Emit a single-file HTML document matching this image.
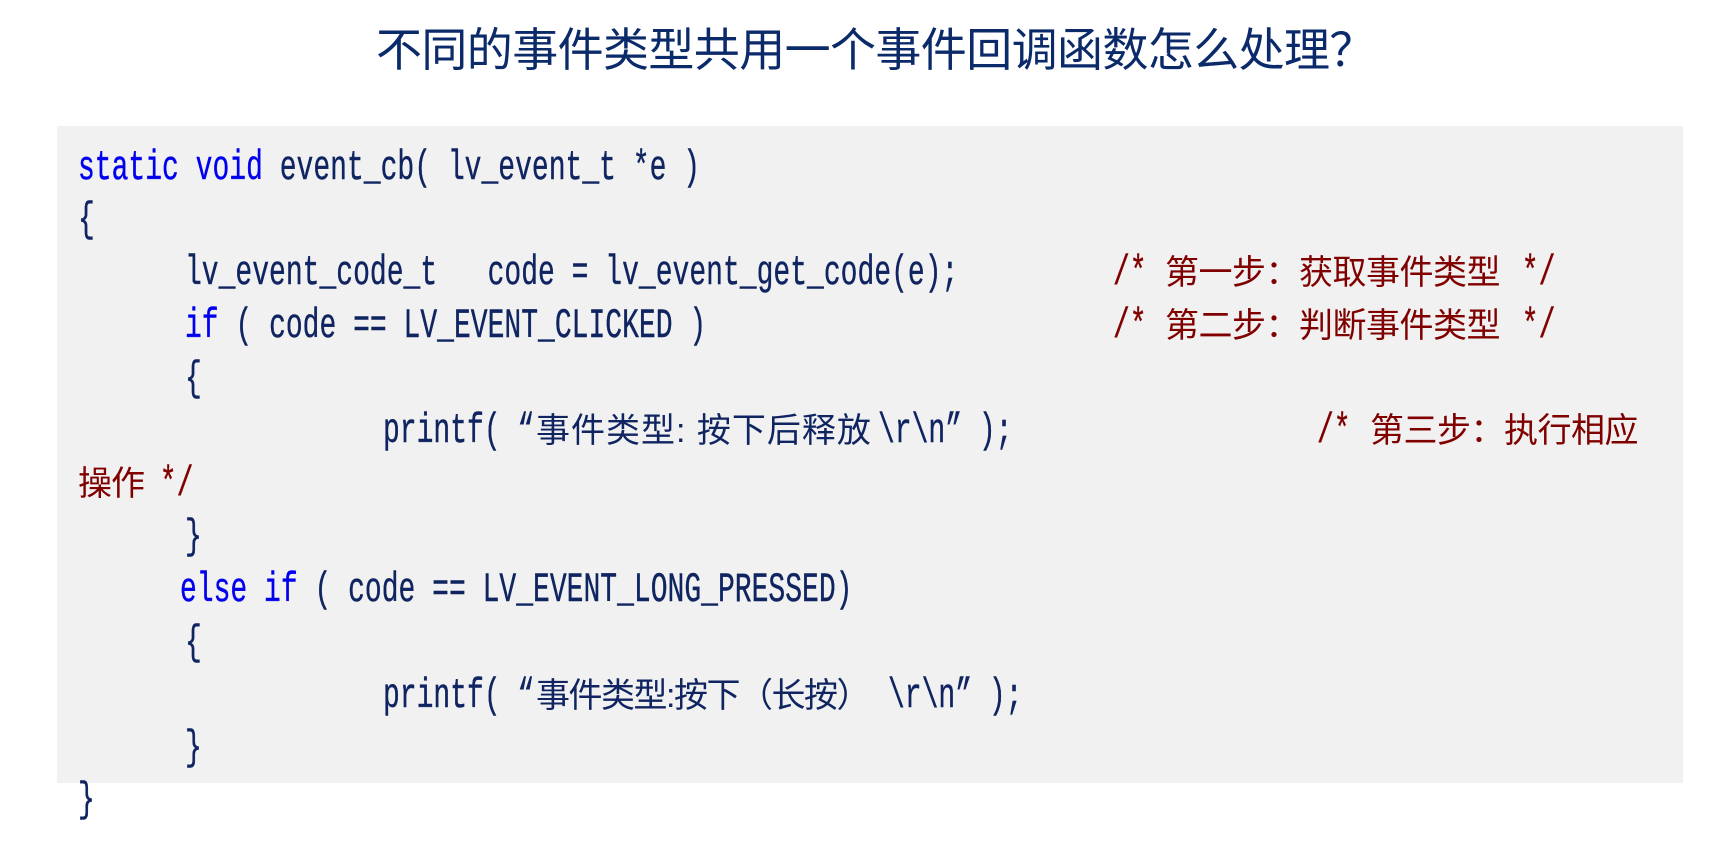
<!DOCTYPE html>
<html><head><meta charset="utf-8"><style>
html,body{margin:0;padding:0;background:#fff;width:1732px;height:852px;overflow:hidden;position:relative}
.t{position:absolute;left:376px;top:22px;font:46px/56px "Liberation Sans","Noto Sans CJK SC",sans-serif;letter-spacing:-0.6px;color:#0b2a6a;white-space:nowrap}
.box{position:absolute;left:57px;top:126px;width:1626px;height:657px;background:#f1f1f1}
.l{position:absolute;font:42px/50px "Liberation Mono",monospace;transform:scaleX(0.667);transform-origin:0 50%;white-space:pre;color:#0f2460;-webkit-text-stroke:0.4px currentColor}
.c{position:absolute;font:34px/50px "Liberation Sans","Noto Sans CJK SC",sans-serif;white-space:pre;color:#0f2460}
.k{color:#0000ee}.r{color:#800000}
</style></head><body>
<div class="t">不同的事件类型共用一个事件回调函数怎么处理？</div>
<div class="box"></div>

<div class="l" style="left:78px;top:143px"><span class="k">static void</span> event_cb( lv_event_t *e )</div>
<div class="l" style="left:78px;top:195px">{</div>

<div class="l" style="left:185px;top:248px">lv_event_code_t   code = lv_event_get_code(e);</div>
<div class="l r" style="left:1113px;top:248px">/*</div>
<div class="c r" style="left:1165px;top:248px;letter-spacing:-0.5px">第一步：获取事件类型</div>
<div class="l r" style="left:1505px;top:248px"> */</div>

<div class="l" style="left:185px;top:301px"><span class="k">if</span> ( code == LV_EVENT_CLICKED )</div>
<div class="l r" style="left:1113px;top:301px">/*</div>
<div class="c r" style="left:1165px;top:301px;letter-spacing:-0.5px">第二步：判断事件类型</div>
<div class="l r" style="left:1505px;top:301px"> */</div>

<div class="l" style="left:185px;top:354px">{</div>

<div class="l" style="left:383px;top:406px">printf( “</div>
<div class="c" style="left:536px;top:406px;letter-spacing:1px">事件类型: 按下后释放</div>
<div class="l" style="left:878px;top:406px">\r\n” );</div>
<div class="l r" style="left:1317px;top:406px">/*</div>
<div class="c r" style="left:1370px;top:406px;letter-spacing:-0.5px">第三步：执行相应</div>

<div class="c r" style="left:78px;top:459px;letter-spacing:-1px">操作</div>
<div class="l r" style="left:143px;top:459px"> */</div>

<div class="l" style="left:185px;top:512px">}</div>

<div class="l" style="left:180px;top:565px"><span class="k">else if</span> ( code == LV_EVENT_LONG_PRESSED)</div>
<div class="l" style="left:185px;top:618px">{</div>

<div class="l" style="left:383px;top:671px">printf( “</div>
<div class="c" style="left:536px;top:671px;letter-spacing:-1.5px">事件类型:按下（长按）</div>
<div class="l" style="left:888px;top:671px">\r\n” );</div>

<div class="l" style="left:185px;top:723px">}</div>
<div class="l" style="left:78px;top:775px">}</div>
</body></html>
